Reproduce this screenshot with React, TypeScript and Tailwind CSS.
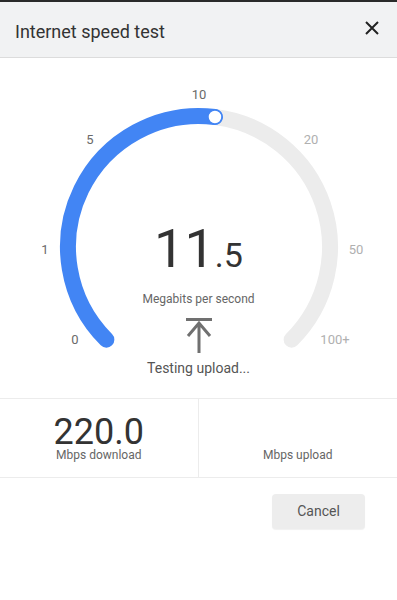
import type { FC } from 'react';

const CX = 199;
const CY = 189;
const R = 131;

const pt = (deg: number) => {
  const a = (deg * Math.PI) / 180;
  return [CX + R * Math.sin(a), CY - R * Math.cos(a)];
};

const arc = (from: number, to: number) => {
  const [x1, y1] = pt(from);
  const [x2, y2] = pt(to);
  const large = to - from > 180 ? 1 : 0;
  return `M ${x1} ${y1} A ${R} ${R} 0 ${large} 1 ${x2} ${y2}`;
};

const KNOB = 7;

const Gauge: FC = () => {
  const [kx, ky] = pt(KNOB);
  return (
    <svg className="absolute inset-0" width={397} height={340} viewBox="0 0 397 340">
      <path d={arc(KNOB, 135)} fill="none" stroke="#ececec" strokeWidth={16} strokeLinecap="round" />
      <path d={arc(-135, KNOB)} fill="none" stroke="#4285f4" strokeWidth={16} strokeLinecap="round" />
      <circle cx={kx} cy={ky} r={7} fill="#fff" stroke="#4285f4" strokeWidth={1.5} />
    </svg>
  );
};

const Label: FC<{ text: string; className: string; light?: boolean }> = ({ text, className, light }) => (
  <span
    className={`absolute -translate-x-1/2 -translate-y-1/2 text-[13px] leading-none ${
      light ? 'text-[#b0b0b0]' : 'text-[#6a6a6a]'
    } ${className}`}
  >
    {text}
  </span>
);

export default function App() {
  return (
    <div className="w-[397px] h-[600px] bg-white border-t-2 border-[#2a2a2a] font-['Roboto','Liberation_Sans',sans-serif]">
      <header className="flex h-[56px] items-center justify-between border-b border-[#dcdcdc] bg-[#f1f2f3] pl-[15px] pr-[18px] pt-[5px]">
        <h1 className="text-[18px] leading-7 text-[#333]">Internet speed test</h1>
        <svg width="14" height="14" viewBox="0 0 14 14" className="-mt-[8px]">
          <path d="M1 1 L13 13 M13 1 L1 13" stroke="#222" strokeWidth="2" fill="none" />
        </svg>
      </header>

      <section className="relative flex h-[340px] flex-col items-center pt-[164px]">
        <Gauge />
        <Label text="0" className="left-[75px] top-[281px]" />
        <Label text="1" className="left-[45px] top-[191px]" />
        <Label text="5" className="left-[90px] top-[81px]" />
        <Label text="10" className="left-[199px] top-[36px]" />
        <Label text="20" light className="left-[311px] top-[81px]" />
        <Label text="50" light className="left-[356px] top-[191px]" />
        <Label text="100+" light className="left-[335px] top-[281px]" />

        <div className="relative flex items-baseline text-[#333] leading-[54px]">
          <span className="text-[54px]">11</span>
          <span className="text-[34px]">.5</span>
        </div>
        <p className="relative mt-[9px] text-[12px] leading-4 text-[#666]">Megabits per second</p>
        <svg width="28" height="36" viewBox="0 0 28 36" className="relative mt-[10px]">
          <path d="M1 2.5 H27 M14 6 V36 M3 19 L14 6 L25 19" stroke="#707070" strokeWidth="3" fill="none" />
        </svg>
        <p className="relative mt-[5px] text-[14px] leading-5 text-[#555]">Testing upload...</p>
      </section>

      <div className="grid grid-cols-2 border-y border-[#ececec]">
        <div className="flex h-[78px] flex-col items-center justify-end border-r border-[#ececec] pb-[15px]">
          <span className="text-[36px] leading-[32px] text-[#333]">220.0</span>
          <span className="text-[12px] leading-[14px] text-[#666]">Mbps download</span>
        </div>
        <div className="flex h-[78px] flex-col items-center justify-end pb-[15px]">
          <span className="text-[12px] leading-[14px] text-[#666]">Mbps upload</span>
        </div>
      </div>

      <div className="flex justify-end pr-[32px] pt-[16px]">
        <button className="h-[35px] w-[93px] rounded-[4px] bg-[#ededed] text-[14px] text-[#555] shadow-[0_1px_1px_rgba(0,0,0,0.06)]">
          Cancel
        </button>
      </div>
    </div>
  );
}
